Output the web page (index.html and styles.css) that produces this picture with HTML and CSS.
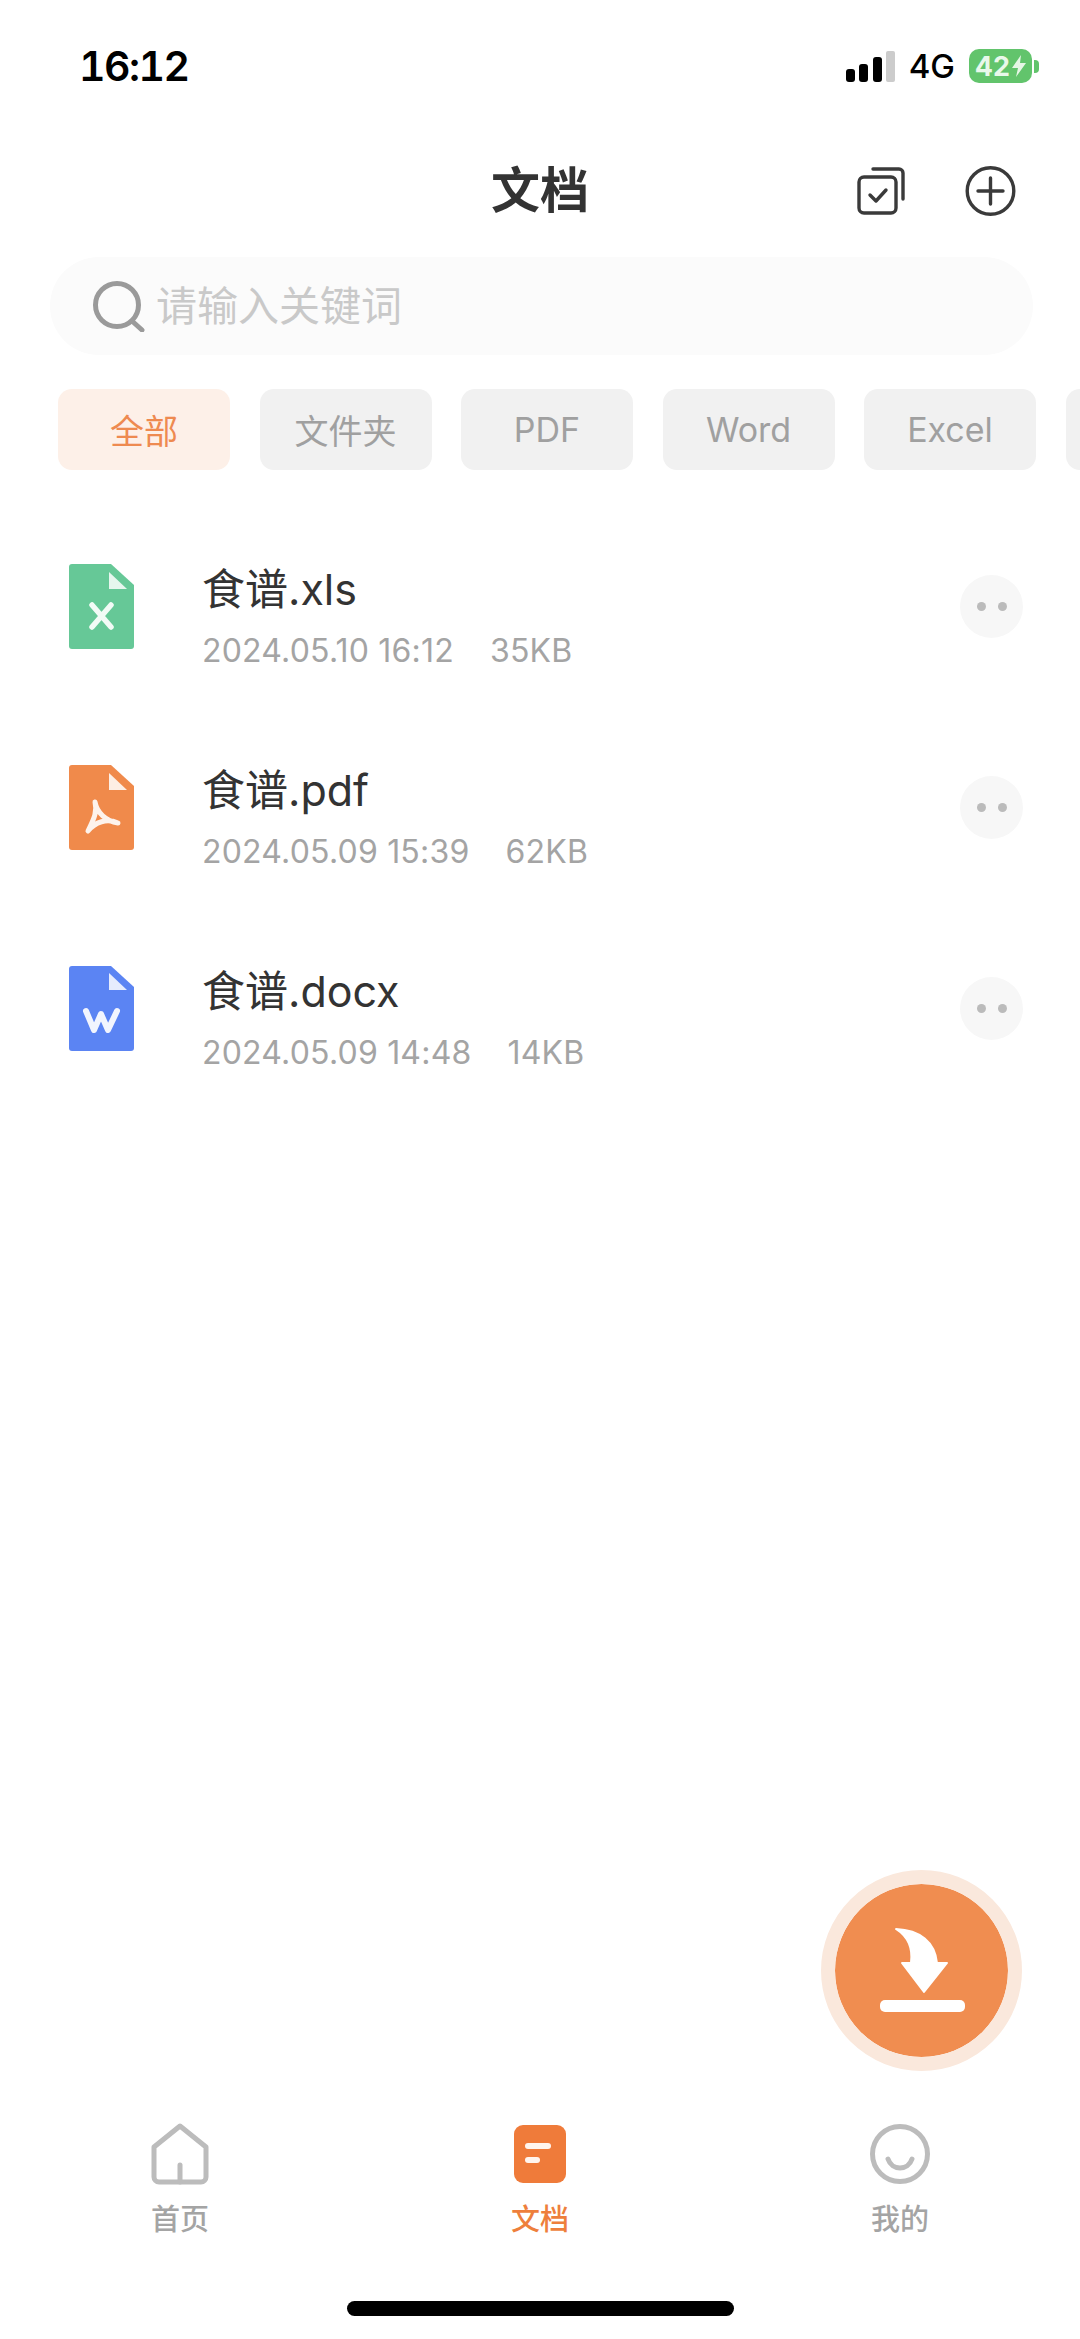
FILE: index.html
```html
<!DOCTYPE html>
<html lang="zh-CN">
<head>
<meta charset="utf-8">
<title>文档</title>
<link rel="stylesheet" href="styles.css">
</head>
<body>
<div class="page">
  <div class="status">
    <span class="time">16:12</span>
    <div class="status-right">
      <svg class="signal" width="49" height="31" viewBox="0 0 49 31"><rect x="0" y="18" width="9" height="13" rx="3" fill="#000"/><rect x="13" y="13" width="9" height="18" rx="3" fill="#000"/><rect x="27" y="6" width="9" height="25" rx="3" fill="#000"/><rect x="40" y="0" width="9" height="31" rx="2" fill="#ccc"/></svg>
      <span class="net">4G</span>
      <div class="battery-wrap">
        <div class="battery"><span>42</span><svg width="14" height="22" viewBox="0 0 14 22"><path d="M9 0 L0 13 H6 L4 22 L14 8 H8 Z" fill="#e6f6e6"/></svg></div>
        <span class="nub"></span>
      </div>
    </div>
  </div>

  <header class="header">
    <span></span>
    <h1 class="title">文档</h1>
    <div class="actions">
      <svg width="48" height="48" viewBox="0 0 48 48" fill="none" stroke="#3a3a3a" stroke-width="3.4" stroke-linecap="round" stroke-linejoin="round"><rect x="2" y="10" width="37" height="36" rx="5"/><path d="M16 2 H42 a4 4 0 0 1 4 4 V32"/><path d="M13 28 L19 34 L29 23"/></svg>
      <svg width="51" height="50" viewBox="0 0 51 50" fill="none" stroke="#3a3a3a" stroke-width="3.4" stroke-linecap="round"><circle cx="25.5" cy="25" r="23.3"/><path d="M13 25 H38 M25.5 12 V38"/></svg>
    </div>
  </header>

  <div class="search">
    <svg width="54" height="52" viewBox="0 0 54 52" fill="none" stroke="#9a9a9a" stroke-width="5" stroke-linecap="round"><circle cx="25" cy="25" r="21.5"/><path d="M40 41 L50 50"/></svg>
    <span class="placeholder">请输入关键词</span>
  </div>

  <div class="chips">
    <span class="chip chip-active">全部</span>
    <span class="chip">文件夹</span>
    <span class="chip">PDF</span>
    <span class="chip">Word</span>
    <span class="chip">Excel</span>
    <span class="chip"></span>
  </div>

  <ul class="files">
    <li class="file">
      <svg class="file-icon" width="65" height="85" viewBox="0 0 65 85"><path class="doc-green" d="M3 0 H42 L65 21 V82 a3 3 0 0 1 -3 3 H3 a3 3 0 0 1 -3 -3 V3 a3 3 0 0 1 3 -3 Z"/><path d="M40 8 V25 H58 Z" fill="#e6f6ee"/><path d="M23 41 L42 63 M42 41 L23 63" stroke="#f2fbf6" stroke-width="5.5" stroke-linecap="round" fill="none"/></svg>
      <div class="file-text">
        <div class="file-name">食谱.xls</div>
        <div class="file-meta"><span>2024.05.10 16:12</span><span>35KB</span></div>
      </div>
      <button class="more"><i></i><i></i></button>
    </li>
    <li class="file">
      <svg class="file-icon" width="65" height="85" viewBox="0 0 65 85"><path class="doc-orange" d="M3 0 H42 L65 21 V82 a3 3 0 0 1 -3 3 H3 a3 3 0 0 1 -3 -3 V3 a3 3 0 0 1 3 -3 Z"/><path d="M40 8 V25 H58 Z" fill="#fdeee4"/><path d="M26 37 C28 48 37 56 49 58 C38 53 26 57 19 66 C23 57 29 48 26 37 Z" stroke="#fdf3ec" stroke-width="5" stroke-linejoin="round" fill="none"/></svg>
      <div class="file-text">
        <div class="file-name">食谱.pdf</div>
        <div class="file-meta"><span>2024.05.09 15:39</span><span>62KB</span></div>
      </div>
      <button class="more"><i></i><i></i></button>
    </li>
    <li class="file">
      <svg class="file-icon" width="65" height="85" viewBox="0 0 65 85"><path class="doc-blue" d="M3 0 H42 L65 21 V82 a3 3 0 0 1 -3 3 H3 a3 3 0 0 1 -3 -3 V3 a3 3 0 0 1 3 -3 Z"/><path d="M40 7 V24 H58 Z" fill="#e6ecfd"/><path d="M17 45 L25 64 L32 48 L39 64 L48 45" stroke="#f2f5fe" stroke-width="6" stroke-linecap="round" stroke-linejoin="round" fill="none"/></svg>
      <div class="file-text">
        <div class="file-name">食谱.docx</div>
        <div class="file-meta"><span>2024.05.09 14:48</span><span>14KB</span></div>
      </div>
      <button class="more"><i></i><i></i></button>
    </li>
  </ul>

  <button class="fab">
    <svg width="173" height="173" viewBox="0 0 173 173"><path d="M61 45 C85 46 100 58 102 79 H112 L89 108 L67 79 H76 C78 64 72 52 61 45 Z" fill="#fff" stroke="#fff" stroke-width="2" stroke-linejoin="round"/><rect x="45" y="116" width="85" height="12" rx="5" fill="#fff"/></svg>
  </button>

  <nav class="tabs">
    <div class="tab">
      <svg width="58" height="62" viewBox="0 0 58 62" fill="none" stroke="#bcbcbc" stroke-width="5" stroke-linecap="round" stroke-linejoin="round"><path d="M29 3 L55 24 V54 a5 5 0 0 1 -5 5 H8 a5 5 0 0 1 -5 -5 V24 Z"/><path d="M29 42 V59"/></svg>
      <span>首页</span>
    </div>
    <div class="tab tab-active">
      <svg width="52" height="62" viewBox="0 0 52 62"><rect x="0" y="2" width="52" height="58" rx="9" fill="#ef7b3a"/><rect x="11" y="20" width="26" height="6" rx="3" fill="#fff5ee"/><rect x="11" y="34" width="15" height="6" rx="3" fill="#fff5ee"/></svg>
      <span>文档</span>
    </div>
    <div class="tab">
      <svg width="60" height="62" viewBox="0 0 60 62" fill="none" stroke="#bcbcbc" stroke-width="5" stroke-linecap="round"><circle cx="30" cy="31" r="27.5"/><path d="M18 36 C22 48 38 48 42 36"/></svg>
      <span>我的</span>
    </div>
  </nav>
  <div class="home-bar"></div>
</div>
</body>
</html>
```
FILE: styles.css
```css
* { box-sizing: border-box; margin: 0; padding: 0; }
html, body { background: #fff; }
body {
  font-family: "Inter", "Noto Sans CJK SC", sans-serif;
  color: #333;
}
.page {
  position: relative;
  width: 1080px;
  height: 2339px;
  overflow: hidden;
  display: flex;
  flex-direction: column;
}
.status {
  height: 146px;
  padding: 49px 41px 0 79px;
  display: flex;
  justify-content: space-between;
  align-items: flex-start;
}
.time {
  font-size: 41px;
  line-height: 34px;
  font-weight: 600;
  color: #000;
  font-variant-numeric: tabular-nums;
  letter-spacing: -1.5px;
}
.status-right { display: flex; align-items: center; height: 34px; }
.signal { display: block; }
.net {
  margin-left: 14px;
  font-size: 33px;
  line-height: 34px;
  color: #000;
  font-weight: 500;
}
.battery-wrap { margin-left: 14px; display: flex; align-items: center; gap: 2px; }
.battery {
  width: 63px;
  height: 34px;
  border-radius: 10px;
  background: #62c46c;
  color: #e9f8ea;
  font-size: 27px;
  font-weight: 700;
  display: flex;
  align-items: center;
  justify-content: center;
  gap: 2px;
}
.nub { width: 5px; height: 13px; border-radius: 0 4px 4px 0; background: #62c46c; }
.header {
  height: 90px;
  display: grid;
  grid-template-columns: 1fr auto 1fr;
  align-items: center;
  padding-right: 64px;
  padding-left: 64px;
}
.title {
  font-size: 49px;
  line-height: 60px;
  font-weight: 700;
  color: #333;
}
.actions {
  display: flex;
  justify-content: flex-end;
  align-items: center;
  gap: 60px;
}
.search {
  margin: 21px 47px 0 50px;
  height: 98px;
  border-radius: 49px;
  background: #fbfbfb;
  display: flex;
  align-items: center;
  padding-left: 42px;
  gap: 10px;
}
.search svg { display: block; }
.placeholder {
  font-size: 41px;
  line-height: 56px;
  color: #c9c9c9;
}
.chips {
  margin-top: 34px;
  padding-left: 58px;
  display: flex;
  gap: 29.5px;
  overflow: hidden;
}
.chip {
  flex: none;
  width: 172px;
  height: 81px;
  border-radius: 14px;
  background: #f1f1f1;
  color: #a0a0a0;
  font-size: 34px;
  display: flex;
  align-items: center;
  justify-content: center;
}
.chip-active { background: #fdf0e8; color: #ee8a50; }
.files {
  list-style: none;
  margin-top: 36px;
  padding: 0 57px 0 69px;
}
.file {
  height: 201px;
  display: flex;
  align-items: center;
}
.file-icon { flex: none; display: block; }
.file-text { flex: 1; margin: 27px 0 0 68px; }
.file-name {
  font-size: 43px;
  line-height: 60px;
  color: #333;
}
.file-meta {
  font-size: 32px;
  line-height: 62px;
  letter-spacing: 0.2px;
  color: #a4a4a4;
  display: flex;
  gap: 36px;
  margin-top: 1px;
}
.more {
  flex: none;
  width: 63px;
  height: 63px;
  border: 0;
  border-radius: 50%;
  background: #f7f7f7;
  display: flex;
  align-items: center;
  justify-content: center;
  gap: 12px;
}
.more i { width: 9px; height: 9px; border-radius: 50%; background: #bbb; }
.doc-green { fill: #66c897; }
.doc-orange { fill: #f08a4b; }
.doc-blue { fill: #5b84f3; }
.fab {
  position: absolute;
  left: 821px;
  top: 1870px;
  width: 201px;
  height: 201px;
  border-radius: 50%;
  border: 14px solid #fae8dc;
  background: #f08d50;
  background-clip: padding-box;
  display: flex;
  align-items: center;
  justify-content: center;
}
.fab svg { display: block; flex: none; }
.tabs {
  margin-top: auto;
  display: grid;
  grid-template-columns: repeat(3, 1fr);
}
.tab {
  display: flex;
  flex-direction: column;
  align-items: center;
  gap: 21px;
  font-size: 29px;
  line-height: 28px;
  font-weight: 500;
  color: #a4a4a4;
}
.tab svg { display: block; }
.tab-active { color: #ee7f3c; }
.home-bar {
  margin: 67px auto 23px;
  width: 387px;
  height: 15px;
  border-radius: 8px;
  background: #000;
}
```
